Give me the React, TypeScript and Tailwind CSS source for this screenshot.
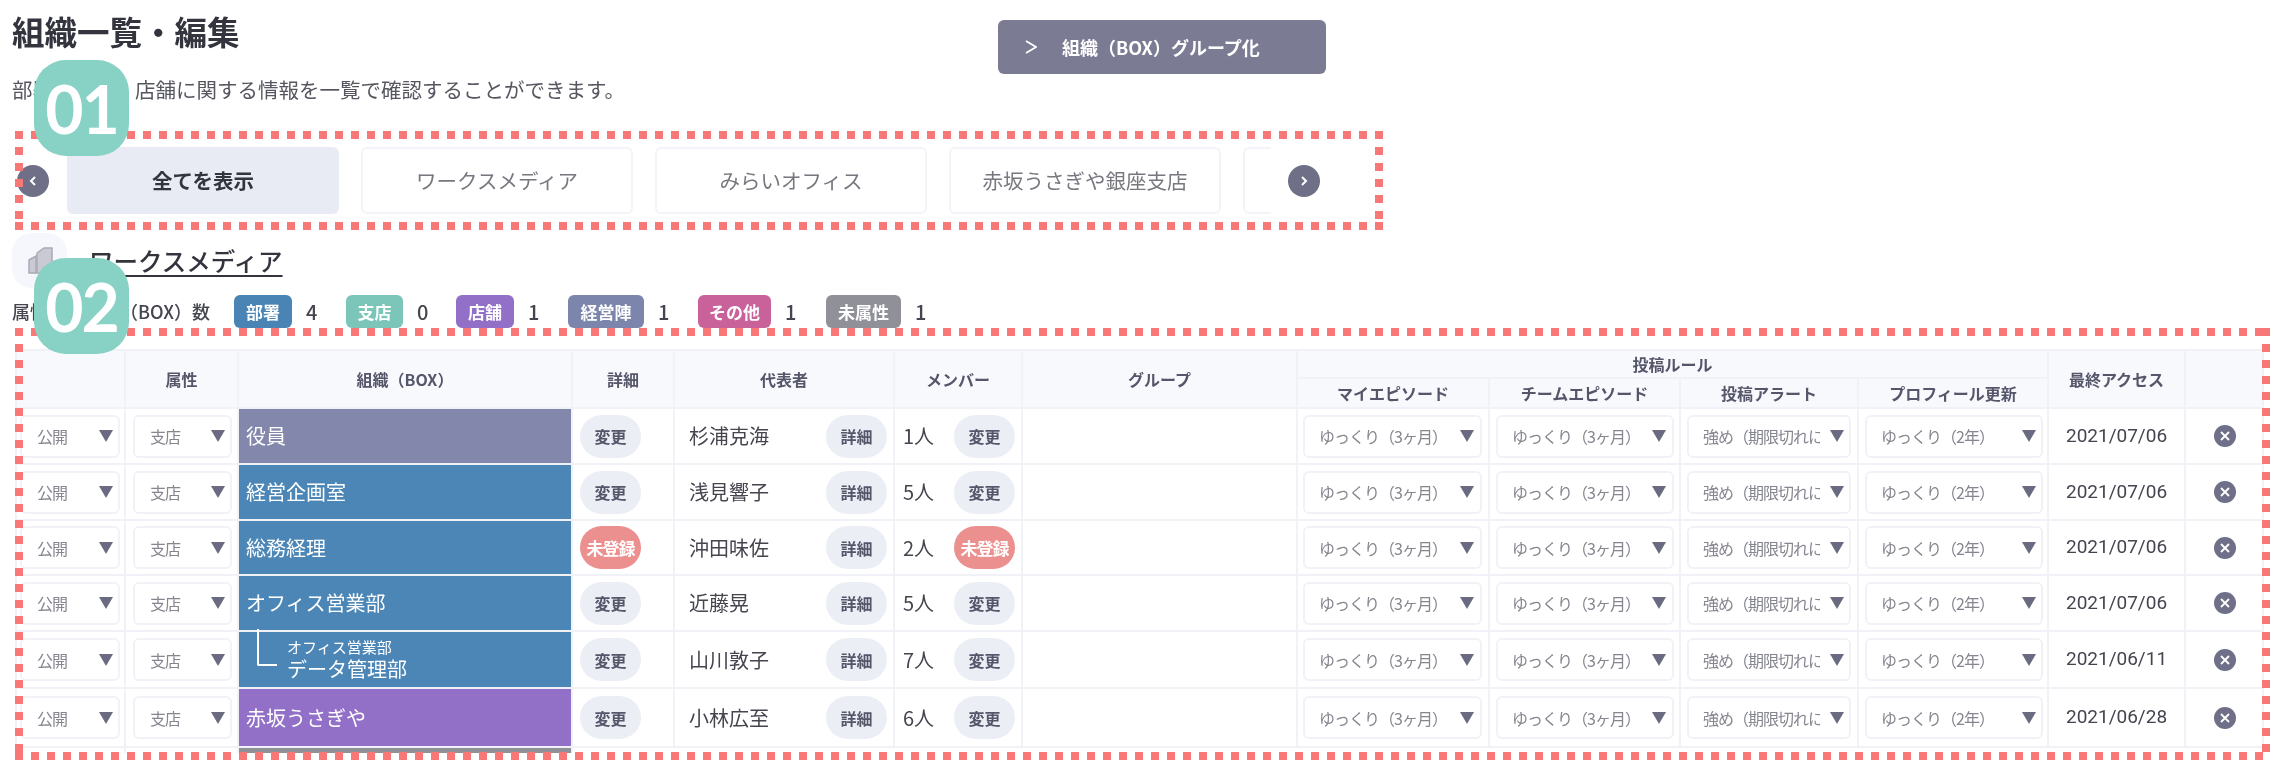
const tabs = ["全てを表示", "ワークスメディア", "みらいオフィス", "赤坂うさぎや銀座支店", ""];

const counts = [
  { label: "部署", value: 4, color: "bg-[#4a84b5]", box: "w-[58px]", item: "w-[112px]" },
  { label: "支店", value: 0, color: "bg-[#7bc6b8]", box: "w-[57px]", item: "w-[110px]" },
  { label: "店舗", value: 1, color: "bg-[#9270c8]", box: "w-[58px]", item: "w-[112px]" },
  { label: "経営陣", value: 1, color: "bg-[#7c85ab]", box: "w-[76px]", item: "w-[130px]" },
  { label: "その他", value: 1, color: "bg-[#c9629a]", box: "w-[73px]", item: "w-[128px]" },
  { label: "未属性", value: 1, color: "bg-[#8f9098]", box: "w-[75px]", item: "w-[110px]" },
];

const rows = [
  { h: "h-[56px]", org: "役員", color: "bg-[#8387ab]", name: "杉浦克海", members: "1人", date: "2021/07/06" },
  { h: "h-[56px]", org: "経営企画室", color: "bg-[#4c86b6]", name: "浅見響子", members: "5人", date: "2021/07/06" },
  { h: "h-[55px]", org: "総務経理", color: "bg-[#4c86b6]", name: "沖田味佐", members: "2人", date: "2021/07/06", unregistered: true },
  { h: "h-[56px]", org: "オフィス営業部", color: "bg-[#4c86b6]", name: "近藤晃", members: "5人", date: "2021/07/06" },
  { h: "h-[57px]", org: "データ管理部", parent: "オフィス営業部", color: "bg-[#4c86b6]", name: "山川敦子", members: "7人", date: "2021/06/11" },
  { h: "h-[59px]", org: "赤坂うさぎや", color: "bg-[#9270c8]", name: "小林広至", members: "6人", date: "2021/06/28" },
];

function Triangle() {
  return (
    <svg width="14" height="12" viewBox="0 0 14 12" className="shrink-0">
      <polygon points="0,0 14,0 7,12" fill="#6a6b80" />
    </svg>
  );
}

function Select({ text, className }: { text: string; className: string }) {
  return (
    <div className={`flex h-[43px] items-center justify-between gap-2.5 rounded-md border-2 border-[#f1f2f7] bg-white text-[16px] tracking-[-1px] text-[#85868f] ${className}`}>
      <span className="min-w-0 flex-1 overflow-hidden whitespace-nowrap">{text}</span>
      <Triangle />
    </div>
  );
}

function Pill({ text, alert }: { text: string; alert?: boolean }) {
  return (
    <div
      className={`flex h-[43px] w-[61px] shrink-0 items-center justify-center rounded-full font-bold ${
        alert ? "bg-[#ec8f8f] text-[17px] tracking-[-1px] text-white" : "bg-[#eceef5] text-[16px] text-[#55566a]"
      }`}
    >
      {text}
    </div>
  );
}

function RoundArrow({ dir }: { dir: "left" | "right" }) {
  return (
    <div className="flex h-[32px] w-[32px] shrink-0 items-center justify-center rounded-full bg-[#6f7088]">
      <svg width="10" height="12" viewBox="0 0 10 12">
        <polyline
          points={dir === "left" ? "7,2 3,6 7,10" : "3,2 7,6 3,10"}
          fill="none"
          stroke="white"
          strokeWidth="2"
        />
      </svg>
    </div>
  );
}

function DashedFrame() {
  return (
    <svg className="pointer-events-none absolute inset-0 h-full w-full">
      <line x1="0" y1="4" x2="100%" y2="4" stroke="#f87878" strokeWidth="8" strokeDasharray="8 8" />
      <line x1="0" y1="100%" x2="100%" y2="100%" stroke="#f87878" strokeWidth="16" strokeDasharray="8 8" />
      <line x1="4" y1="0" x2="4" y2="100%" stroke="#f87878" strokeWidth="8" strokeDasharray="8 8" />
      <line x1="100%" y1="0" x2="100%" y2="100%" stroke="#f87878" strokeWidth="16" strokeDasharray="8 8" />
    </svg>
  );
}

function NumberBadge({ text, className }: { text: string; className: string }) {
  return (
    <div
      className={`absolute left-[34px] flex h-[96px] w-[95px] items-center justify-center rounded-[32px] bg-[#87d1c5] font-['Lato',sans-serif] text-[66px] font-bold tracking-[-2px] text-white ${className}`}
    >
      {text}
    </div>
  );
}

const th = "border-2 border-[#f1f2f7] bg-[#f8f9fd] text-center text-[16px] font-bold text-[#55566a]";
const td = "border-2 border-[#f1f2f7] p-0";

export default function App() {
  return (
    <div className="relative h-[768px] w-[2280px] overflow-hidden bg-white font-['Noto_Sans_CJK_JP','Noto_Sans',sans-serif] text-[#3b3b45] blur-[0.5px]">
      <div className="flex h-[131px]">
        <div className="w-[998px] pl-3 pt-[9px]">
          <h1 className="text-[32.5px] leading-[44px] font-bold text-[#33343d]">組織一覧・編集</h1>
          <p className="mt-[21px] text-[20.5px] leading-[30px] text-[#55565f]">部署・支店・店舗に関する情報を一覧で確認することができます。</p>
        </div>
        <div className="mt-[20px] flex h-[54px] w-[328px] items-center rounded-md bg-[#7b7c93] pl-[27px] text-[18px] font-bold text-white">
          <svg width="12" height="14" viewBox="0 0 12 14" className="mr-[25px]">
            <polyline points="1,1 11,7 1,13" fill="none" stroke="white" strokeWidth="1.8" />
          </svg>
          組織（BOX）グループ化
        </div>
      </div>

      <div className="relative ml-[15px] flex h-[99px] w-[1368px] items-center pl-[2px]">
        <RoundArrow dir="left" />
        <div className="ml-[18px] flex w-[1204px] gap-[22px] overflow-hidden">
          {tabs.map((tab, i) => (
            <div
              key={i}
              className={`flex h-[67px] w-[272px] shrink-0 items-center justify-center rounded-md text-[20.5px] ${
                i === 0 ? "bg-[#e8ebf3] font-bold text-[#33343d]" : "border-2 border-[#f3f4f9] text-[#77787f]"
              }`}
            >
              {tab}
            </div>
          ))}
        </div>
        <div className="ml-[17px]">
          <RoundArrow dir="right" />
        </div>
        <DashedFrame />
      </div>

      <div className="mt-[3px] flex h-[55px] items-center pl-3">
        <div className="flex h-[55px] w-[55px] items-center justify-center rounded-[20px] bg-[#f6f7fc]">
          <svg width="26" height="27" viewBox="0 0 26 27" fill="#c9cad4" stroke="#a9aab6" strokeWidth="1.5">
            <path d="M10 6 L17 1 H25 V26 H10 Z" />
            <path d="M2 13 L9 9 V26 H2 Z" />
          </svg>
        </div>
        <span className="ml-[22px] text-[24.5px] leading-[30px] font-medium text-[#33343d] underline underline-offset-4">ワークスメディア</span>
      </div>

      <div className="mt-[7px] flex h-[33px] items-center pl-3 text-[18px] text-[#44454e]">
        <span className="w-[222px] font-medium">属性別の組織（BOX）数</span>
        {counts.map((c) => (
          <div key={c.label} className={`flex items-center ${c.item}`}>
            <div className={`flex h-[33px] items-center justify-center rounded-md text-[17px] font-bold text-white ${c.color} ${c.box}`}>{c.label}</div>
            <span className="ml-[14px] text-[20px] font-medium">{c.value}</span>
          </div>
        ))}
      </div>

      <div className="relative ml-[15px] h-[432px] w-[2255px]">
        <div className="h-[425px] overflow-hidden pt-[21px]">
          <table className="w-[2247px] table-fixed border-collapse">
            <colgroup>
              <col className="w-[109px]" />
              <col className="w-[113px]" />
              <col className="w-[334px]" />
              <col className="w-[102px]" />
              <col className="w-[220px]" />
              <col className="w-[128px]" />
              <col className="w-[275px]" />
              <col className="w-[192px]" />
              <col className="w-[191px]" />
              <col className="w-[178px]" />
              <col className="w-[190px]" />
              <col className="w-[137px]" />
              <col className="w-[78px]" />
            </colgroup>
            <thead>
              <tr className="h-[28px]">
                <th rowSpan={2} className={th}></th>
                <th rowSpan={2} className={th}>属性</th>
                <th rowSpan={2} className={th}>組織（BOX）</th>
                <th rowSpan={2} className={th}>詳細</th>
                <th rowSpan={2} className={th}>代表者</th>
                <th rowSpan={2} className={th}>メンバー</th>
                <th rowSpan={2} className={th}>グループ</th>
                <th colSpan={4} className={th}>投稿ルール</th>
                <th rowSpan={2} className={th}>最終アクセス</th>
                <th rowSpan={2} className={th}></th>
              </tr>
              <tr className="h-[30px]">
                <th className={th}>マイエピソード</th>
                <th className={th}>チームエピソード</th>
                <th className={th}>投稿アラート</th>
                <th className={th}>プロフィール更新</th>
              </tr>
            </thead>
            <tbody>
              {rows.map((row) => (
                <tr key={row.name} className={row.h}>
                  <td className={td}>
                    <Select text="公開" className="ml-[3px] w-[100px] pl-[15px] pr-[5px]" />
                  </td>
                  <td className={td}>
                    <Select text="支店" className="ml-[7px] w-[99px] pl-[15px] pr-[5px]" />
                  </td>
                  <td className={`${td} ${row.color}`}>
                    {row.parent ? (
                      <div className="relative pl-[48px] text-white">
                        <div className="absolute -top-[9px] left-[18px] h-[37px] w-[20px] rounded-bl-[2px] border-b-2 border-l-2 border-white"></div>
                        <div className="text-[15px] leading-[18px]">{row.parent}</div>
                        <div className="text-[20px] leading-[26px]">{row.org}</div>
                      </div>
                    ) : (
                      <div className="pl-[7px] text-[20px] text-white">{row.org}</div>
                    )}
                  </td>
                  <td className={td}>
                    <div className="pl-[7px]">
                      <Pill text={row.unregistered ? "未登録" : "変更"} alert={row.unregistered} />
                    </div>
                  </td>
                  <td className={td}>
                    <div className="flex items-center justify-between pl-[14px] pr-[6px] text-[20px] text-[#44454e]">
                      {row.name}
                      <Pill text="詳細" />
                    </div>
                  </td>
                  <td className={td}>
                    <div className="flex items-center justify-between pl-[8px] pr-[6px] text-[20px] text-[#44454e]">
                      {row.members}
                      <Pill text={row.unregistered ? "未登録" : "変更"} alert={row.unregistered} />
                    </div>
                  </td>
                  <td className={td}></td>
                  <td className={td}>
                    <Select text="ゆっくり（3ヶ月）" className="ml-[5px] w-[179px] pl-[14px] pr-[6px]" />
                  </td>
                  <td className={td}>
                    <Select text="ゆっくり（3ヶ月）" className="ml-[6px] w-[178px] pl-[14px] pr-[6px]" />
                  </td>
                  <td className={td}>
                    <Select text="強め（期限切れに通知）" className="ml-[6px] w-[164px] pl-[14px] pr-[5px]" />
                  </td>
                  <td className={td}>
                    <Select text="ゆっくり（2年）" className="ml-[6px] w-[178px] pl-[14px] pr-[5px]" />
                  </td>
                  <td className={`${td} text-center font-['Roboto',sans-serif] text-[19px] text-[#44454e]`}>{row.date}</td>
                  <td className={td}>
                    <svg width="22" height="22" viewBox="0 0 22 22" className="ml-[28px]">
                      <circle cx="11" cy="11" r="11" fill="#6f7088" />
                      <path d="M7 7 L15 15 M15 7 L7 15" stroke="white" strokeWidth="1.8" />
                    </svg>
                  </td>
                </tr>
              ))}
              <tr className="h-[57px]">
                <td className={td}></td>
                <td className={td}></td>
                <td className={`${td} bg-[#8f9098]`}></td>
                <td className={td} colSpan={10}></td>
              </tr>
            </tbody>
          </table>
        </div>
        <DashedFrame />
      </div>

      <NumberBadge text="01" className="top-[60px]" />
      <NumberBadge text="02" className="top-[258px]" />
    </div>
  );
}
